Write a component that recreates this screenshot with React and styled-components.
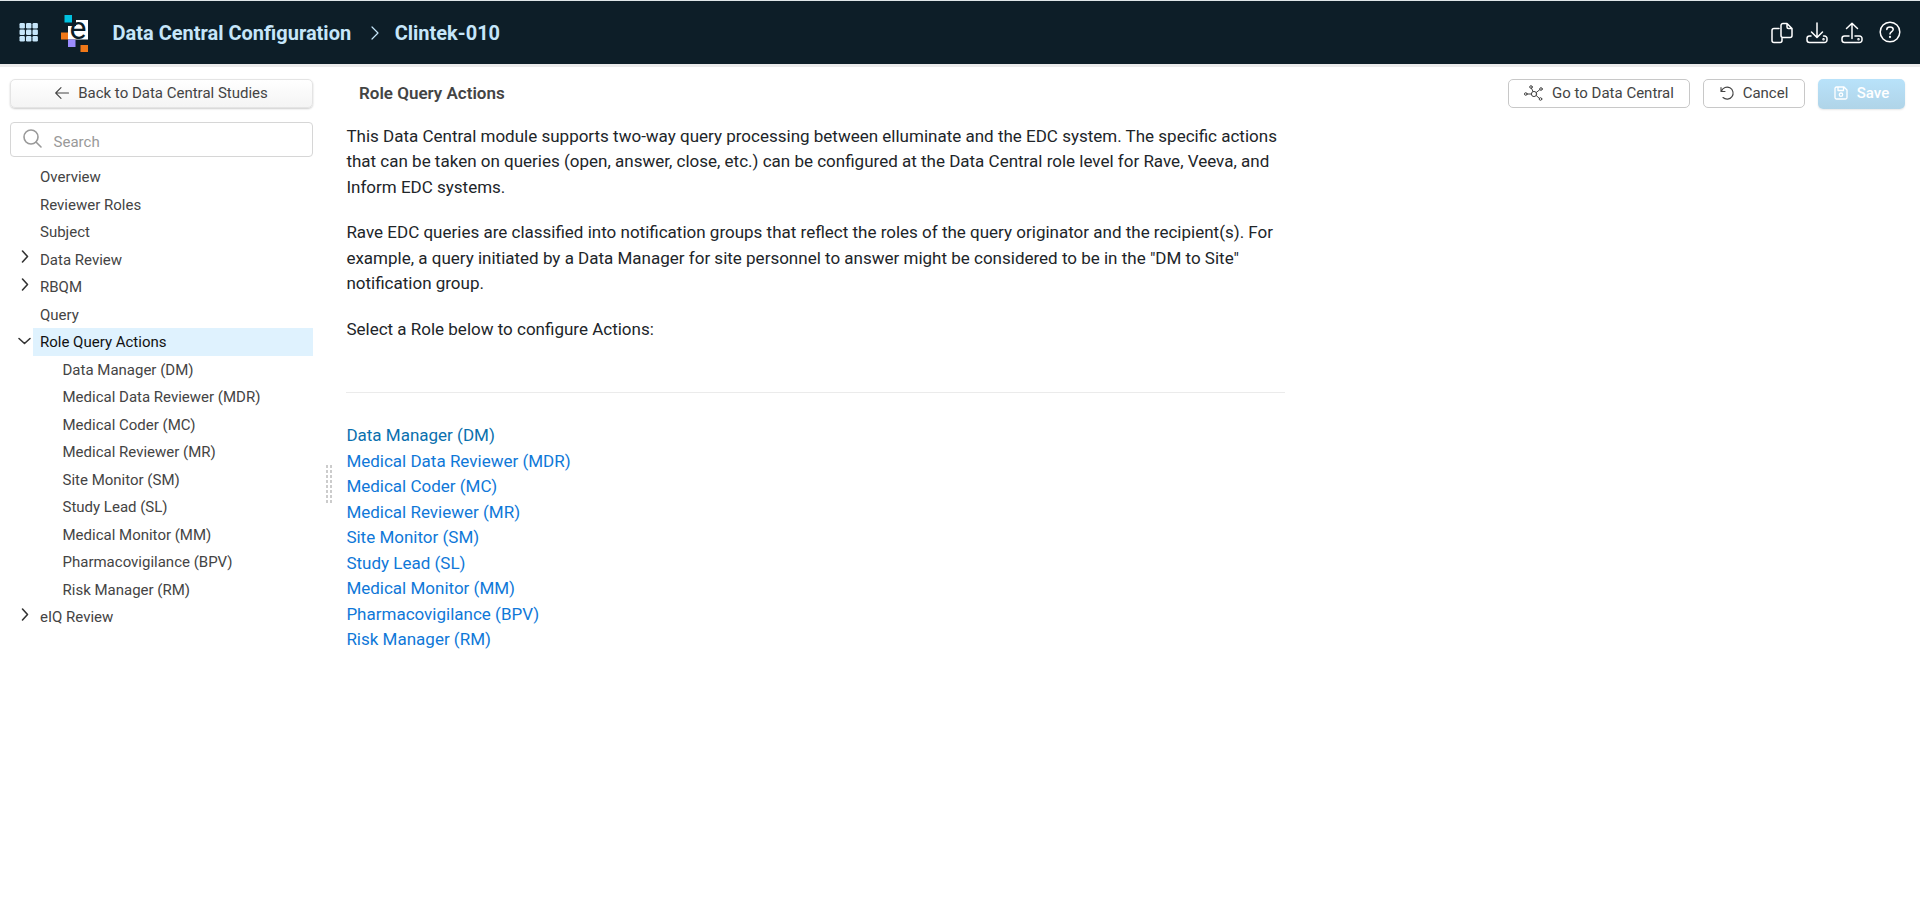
import React from 'react'
import styled, { createGlobalStyle, css } from 'styled-components';

const GlobalStyle = createGlobalStyle`
    * {
        box-sizing: border-box;
    }

    body {
        margin: 0;
        background: #fff;
        color: #444;
        font-family: Roboto, "Liberation Sans", sans-serif;
        font-size: 15px;
    }

    svg {
        display: block;
        flex: none;
        overflow: visible;
    }
`;

const Page = styled.div`
    display: flex;
    flex-direction: column;
    height: 100vh;
    overflow: hidden;
`;

const Header = styled.header`
    display: flex;
    align-items: center;
    flex: none;
    height: 64px;
    padding: 0 19px;
    border-top: 1px solid #dfe6e8;
    background: #0d1e28;
    color: #c6e6fa;
    box-shadow: 0 3px 0 #ebebeb;
`;

const HeaderTitle = styled.div`
    font-size: 20px;
    line-height: 24px;
    font-weight: 700;
    padding-top: 1px;
    white-space: nowrap;
`;

const LogoBox = styled.div`
    margin: 2px 24.5px 0 23px;
`;

const Separator = styled.div`
    margin: 0 15.5px 0 20px;
`;

const HeaderActions = styled.div`
    display: flex;
    align-items: center;
    gap: 13px;
    margin-left: auto;
    color: #fff;

    svg:last-child {
        margin: 0 0 2px 3.5px;
    }
`;

const Body = styled.div`
    display: flex;
    flex: 1;
    min-height: 0;
`;

const Sidebar = styled.aside`
    flex: none;
    width: 323px;
    padding: 15px 10px 0;
`;

const Button = styled.button`
    display: flex;
    align-items: center;
    justify-content: center;
    gap: 9px;
    width: ${({ $width }) => ($width ? `${$width}px` : '100%')};
    height: 29px;
    padding: 0 0 2px;
    border: 1px solid #c8c8c8;
    border-radius: 5px;
    background: #fff;
    color: #444;
    font-family: inherit;
    font-size: 15px;
    line-height: 18px;
    white-space: nowrap;

    ${({ $variant }) => $variant === 'back' && css`
        border-color: #e4e4e4;
        background: linear-gradient(#fff, #f4f4f4);
        box-shadow: 0 1px 2px rgba(0, 0, 0, 0.2);
    `}

    ${({ $variant }) => $variant === 'primary' && css`
        height: 30px;
        border: 0;
        background: linear-gradient(#b8e2fa, #b0d4e8);
        color: #fff;
        font-weight: 500;
        box-shadow: 0 1px 2px rgba(0, 0, 0, 0.1);
    `}
`;

const SearchBox = styled.div`
    display: flex;
    align-items: center;
    gap: 11.6px;
    height: 35px;
    margin-top: 14px;
    padding: 0 12px;
    border: 1px solid #d6d6d6;
    border-radius: 4px;
    color: #999;

    span {
        padding-top: 4px;
    }

    svg {
        margin-bottom: 2px;
    }
`;

const Tree = styled.ul`
    margin: 6px 0 0;
    padding: 0;
    list-style: none;
`;

const TreeRow = styled.li`
    display: flex;
    height: 27.5px;
`;

const Toggle = styled.div`
    display: flex;
    align-items: center;
    justify-content: center;
    width: 23px;
    padding: ${({ $state }) => ($state === 'open' ? '0 0 2px 5px' : '0 0 5px 6px')};
    color: #333;
`;

const TreeLabel = styled.div`
    flex: 1;
    padding-left: ${({ $child }) => ($child ? 29.5 : 7)}px;
    background: ${({ $selected }) => ($selected ? '#dff2fe' : 'transparent')};
    color: ${({ $selected }) => ($selected ? '#111' : '#444')};
    line-height: 29.5px;
    white-space: nowrap;
`;

const Splitter = styled.div`
    display: flex;
    flex: none;
    width: 23px;
    padding: 401px 0 0 3px;
`;

const Grip = styled.div`
    display: grid;
    grid-template-columns: 2px 2px;
    grid-auto-rows: 3px;
    gap: 2px;
    height: 38px;

    i {
        background: #ccc;
    }
`;

const Main = styled.main`
    flex: 1;
    padding: 15px 15px 0 0;
`;

const Toolbar = styled.div`
    display: flex;
    gap: 13px;
    height: 30px;
`;

const PageTitle = styled.h1`
    flex: 1;
    margin: 0;
    padding-left: 13px;
    color: #444;
    font-size: 17px;
    font-weight: 600;
    line-height: 29px;
`;

const Content = styled.div`
    width: 939px;
    padding: 14.5px 0 0 0.4px;
    color: #212529;
    font-size: 17px;
    line-height: 25.5px;
`;

const Paragraph = styled.p`
    margin: 0 0 20px;
`;

const Divider = styled.hr`
    margin: 49.5px 0 30.5px;
    border: 0;
    border-top: 1px solid #ebebeb;
`;

const RoleLink = styled.a`
    display: block;
    color: ${({ $active }) => ($active ? '#0a70ae' : '#0f78d8')};
    text-decoration: none;
`;

const roles = [
    'Data Manager (DM)',
    'Medical Data Reviewer (MDR)',
    'Medical Coder (MC)',
    'Medical Reviewer (MR)',
    'Site Monitor (SM)',
    'Study Lead (SL)',
    'Medical Monitor (MM)',
    'Pharmacovigilance (BPV)',
    'Risk Manager (RM)',
];

const tree = [
    { label: 'Overview' },
    { label: 'Reviewer Roles' },
    { label: 'Subject' },
    { label: 'Data Review', toggle: 'closed' },
    { label: 'RBQM', toggle: 'closed' },
    { label: 'Query' },
    { label: 'Role Query Actions', toggle: 'open', selected: true },
    ...roles.map((label) => ({ label, child: true })),
    { label: 'eIQ Review', toggle: 'closed' },
];

function Icon({ width = 22, height = 22, stroke = 1.5, children }) {
    return (
        <svg width={width} height={height} viewBox={`0 0 ${width} ${height}`} fill="none"
            stroke="currentColor" strokeWidth={stroke} strokeLinecap="round" strokeLinejoin="round">
            {children}
        </svg>
    )
}

function AppsIcon() {
    return (
        <svg width="19" height="19" viewBox="0 0 19 19" fill="currentColor">
            {[0, 6.5, 13].map((y) => [0, 6.5, 13].map((x) => (
                <rect key={`${x}-${y}`} x={x + 0.5} y={y} width="5.4" height="5.4" rx="1.2" />
            )))}
        </svg>
    )
}

function Logo() {
    return (
        <svg width="27" height="37" viewBox="0 0 27 37">
            <rect x="3.500" y="0" width="7.500" height="7.500" fill="#00c1e0" />
            <path d="M7 11H15V5H27V24.500H7Z" fill="#fff" />
            <rect x="0" y="17.500" width="7" height="7" fill="#f07818" />
            <rect x="7" y="24.500" width="7.500" height="7.500" fill="#9b8cff" />
            <rect x="19.500" y="30" width="7.500" height="7" fill="#f07818" />
            <text x="8.500" y="24" fontFamily="Roboto, sans-serif" fontSize="32" fill="#0d1e28">e</text>
        </svg>
    )
}

function TreeToggle({ state }) {
    if (state === 'open') {
        return <Icon width={13} height={8} stroke={1.6}><path d="M1 1.5L6.5 6.5L12 1.5" /></Icon>
    }
    return <Icon width={8} height={13} stroke={1.6}><path d="M1.5 1L6.5 6.5L1.5 12" /></Icon>
}

export default function App() {
    return (
        <Page>
            <GlobalStyle />
            <Header>
                <AppsIcon />
                <LogoBox><Logo /></LogoBox>
                <HeaderTitle>Data Central Configuration</HeaderTitle>
                <Separator>
                    <Icon width={8} height={14} stroke={1.2}><path d="M1 1L7 7L1 13" /></Icon>
                </Separator>
                <HeaderTitle>Clintek-010</HeaderTitle>
                <HeaderActions>
                    <Icon>
                        <path d="M8 6.500H3A2 2 0 0 0 1 8.500V18.500A2 2 0 0 0 3 20.500H9A2 2 0 0 0 11 18.500V16.500" />
                        <path d="M16 1.500H12A2 2 0 0 0 10 3.500V13.500A2 2 0 0 0 12 15.500H19A2 2 0 0 0 21 13.500V6.500L16 1.500V5A1.500 1.500 0 0 0 17.500 6.500H21" />
                    </Icon>
                    <Icon>
                        <path d="M11 1V15M5.500 10L11 15.500L16.500 10" />
                        <path d="M5 14H3.500A2.500 2.500 0 0 0 1 16.500V18A2.500 2.500 0 0 0 3.500 20.500H18.500A2.500 2.500 0 0 0 21 18V16.500A2.500 2.500 0 0 0 18.500 14H17.500" />
                        <circle cx="17.500" cy="17.300" r=".5" />
                    </Icon>
                    <Icon>
                        <path d="M11 16.500V1.500M5.500 6.500L11 1.300L16.500 6.500" />
                        <path d="M8 14H3.500A2.500 2.500 0 0 0 1 16.500V18A2.500 2.500 0 0 0 3.500 20.500H18.500A2.500 2.500 0 0 0 21 18V16.500A2.500 2.500 0 0 0 18.500 14H14" />
                        <circle cx="17.500" cy="17.300" r=".5" />
                    </Icon>
                    <Icon>
                        <circle cx="11" cy="11" r="9.800" />
                        <path d="M7.800 8.500C7.800 5.200 14.200 5.200 14.200 8.500C14.200 10.500 11 10.700 11 13" />
                        <circle cx="11" cy="16" r=".4" />
                    </Icon>
                </HeaderActions>
            </Header>
            <Body>
                <Sidebar>
                    <Button $variant="back">
                        <Icon width={14} height={12} stroke={1.1}><path d="M13.500 6H.7M6 .7L.7 6L6 11.300" /></Icon>
                        Back to Data Central Studies
                    </Button>
                    <SearchBox>
                        <Icon width={19} height={19} stroke={1.6}>
                            <circle cx="8" cy="8" r="7" />
                            <path d="M13 13L18 18" />
                        </Icon>
                        <span>Search</span>
                    </SearchBox>
                    <Tree>
                        {tree.map((item) => (
                            <TreeRow key={item.label}>
                                <Toggle $state={item.toggle}>{item.toggle && <TreeToggle state={item.toggle} />}</Toggle>
                                <TreeLabel $child={item.child} $selected={item.selected}>{item.label}</TreeLabel>
                            </TreeRow>
                        ))}
                    </Tree>
                </Sidebar>
                <Splitter>
                    <Grip>
                        {Array.from({ length: 16 }, (_, i) => <i key={i} />)}
                    </Grip>
                </Splitter>
                <Main>
                    <Toolbar>
                        <PageTitle>Role Query Actions</PageTitle>
                        <Button $width={182}>
                            <Icon width={19} height={16} stroke={1}>
                                <circle cx="10" cy="9" r="2.600" />
                                <circle cx="1.800" cy="9" r="1.300" />
                                <circle cx="7" cy="2" r="1.300" />
                                <circle cx="17" cy="4" r="1.300" />
                                <circle cx="16.500" cy="14" r="1.300" />
                                <path d="M3.200 9H7.400M7.500 3.300L9 6.500M12.300 7.500L15.700 4.700M12.200 10.500L15.300 13.300" />
                            </Icon>
                            Go to Data Central
                        </Button>
                        <Button $width={102}>
                            <Icon width={14} height={14} stroke={1.1}>
                                <path d="M1 1.500V5.500H5M1.500 5A6 6 0 1 1 3 11.500" />
                            </Icon>
                            Cancel
                        </Button>
                        <Button $variant="primary" $width={87}>
                            <Icon width={14} height={14} stroke={1.3}>
                                <path d="M1 2.500A1.500 1.500 0 0 1 2.500 1H10L13 4V11.500A1.500 1.500 0 0 1 11.500 13H2.500A1.500 1.500 0 0 1 1 11.500ZM4 1V4.500H9.500V1" />
                                <circle cx="7" cy="8.700" r="1.700" />
                            </Icon>
                            Save
                        </Button>
                    </Toolbar>
                    <Content>
                        <Paragraph>
                            This Data Central module supports two-way query processing between elluminate and the EDC system. The specific actions
                            that can be taken on queries (open, answer, close, etc.) can be configured at the Data Central role level for Rave, Veeva, and
                            Inform EDC systems.
                        </Paragraph>
                        <Paragraph>
                            Rave EDC queries are classified into notification groups that reflect the roles of the query originator and the recipient(s). For
                            example, a query initiated by a Data Manager for site personnel to answer might be considered to be in the "DM to Site"
                            notification group.
                        </Paragraph>
                        <Paragraph>Select a Role below to configure Actions:</Paragraph>
                        <Divider />
                        {roles.map((role, i) => <RoleLink key={role} $active={i === 0}>{role}</RoleLink>)}
                    </Content>
                </Main>
            </Body>
        </Page>
    )
}
